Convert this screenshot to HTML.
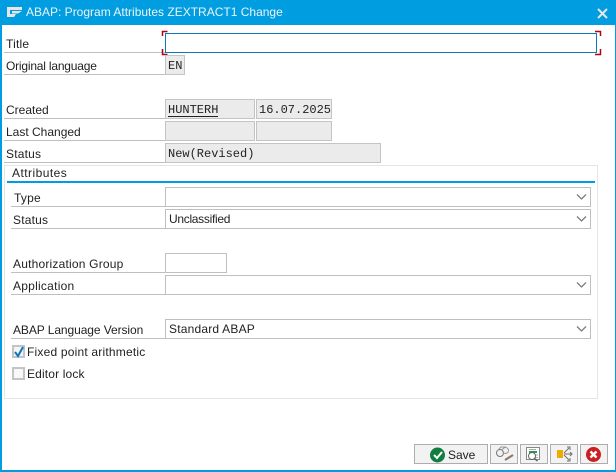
<!DOCTYPE html>
<html><head><meta charset="utf-8"><style>
html,body{margin:0;padding:0;background:#fff}
body{width:616px;height:472px;position:relative;overflow:hidden;font-family:"Liberation Sans",sans-serif;font-size:12px;color:#222}
.a{position:absolute;box-sizing:border-box}
.l{position:absolute;box-sizing:border-box;height:20px;border-bottom:1px solid #bfbfbf;line-height:23px;white-space:nowrap;letter-spacing:.2px}
.b{position:absolute;box-sizing:border-box;height:20px;border:1px solid #c4c4c4;background:#ebebeb;font:12px/21px "Liberation Mono",monospace;padding-left:2px;color:#222;white-space:nowrap}
.d{position:absolute;box-sizing:border-box;left:165px;width:426px;height:20px;border:1px solid #bfbfbf;background:#fff;line-height:18px;padding-left:3px;letter-spacing:.2px}
.d svg{position:absolute;right:3px;top:5px}
.btn{position:absolute;top:444px;height:20px;box-sizing:border-box;border:1px solid #adadad;background:#f2f2f2}
.btn svg{position:absolute;left:0;top:0}
</style></head><body>
<div class="a" style="left:0;top:0;width:616px;height:472px;border:1px solid #009de0;border-width:0 1px 2px 2px"></div>
<div class="a" style="left:0;top:0;width:616px;height:25px;background:#009de0"></div>
<svg class="a" style="left:7px;top:7px" width="16" height="11"><path d="M0 0H15V3H3V7H9L7 10H0Z" fill="#e6e6e6"/><path d="M5 4H15L11 6.500H5Z" fill="#e6e6e6"/></svg>
<div class="a" style="left:26px;top:4px;color:#e8f4fa;font-size:12px;line-height:16px;letter-spacing:0;white-space:nowrap">ABAP: Program Attributes ZEXTRACT1 Change</div>
<svg class="a" style="left:597px;top:8px" width="11" height="11"><path d="M1 1L10 10M10 1L1 10" stroke="#e6e6e6" stroke-width="2" fill="none"/></svg>

<div class="l" style="left:4px;top:33px;width:161px;padding-left:2px">Title</div>
<div class="a" style="left:165px;top:33px;width:432px;height:20px;border:1px solid #0a7cbc;background:#fff"></div>
<svg class="a" style="left:161px;top:30px" width="442" height="26" fill="none" stroke="#b5000f" stroke-width="1.500"><path d="M6.500 1.500H1.500V6M6.500 24.500H1.500V19M434 1.500H439.500V6M434 24.500H439.500V19"/></svg>

<div class="l" style="left:4px;top:55px;width:161px;padding-left:2px;letter-spacing:-.2px">Original language</div>
<div class="b" style="left:165px;top:55px;width:20px">EN</div>

<div class="l" style="left:4px;top:99px;width:161px;padding-left:2px;letter-spacing:0">Created</div>
<div class="b" style="left:165px;top:99px;width:90px">HUNTERH<span class="a" style="left:2px;top:16px;width:50px;height:1px;background:#222"></span></div>
<div class="b" style="left:256px;top:99px;width:76px">16.07.2025</div>

<div class="l" style="left:4px;top:121px;width:161px;padding-left:2px;letter-spacing:0">Last Changed</div>
<div class="b" style="left:165px;top:121px;width:90px"></div>
<div class="b" style="left:256px;top:121px;width:76px"></div>

<div class="l" style="left:4px;top:143px;width:161px;padding-left:2px">Status</div>
<div class="b" style="left:165px;top:143px;width:216px">New(Revised)</div>

<div class="a" style="left:4px;top:165px;width:594px;height:234px;border:1px solid #e5e5e5"></div>
<div class="a" style="left:12px;top:166px;line-height:15px;letter-spacing:.45px">Attributes</div>
<div class="a" style="left:7px;top:181px;width:588px;height:2px;background:#009de0"></div>

<div class="l" style="left:11px;top:187px;width:154px;padding-left:3px">Type</div>
<div class="d" style="top:187px"><svg width="11" height="8"><path d="M1 1.500L5.500 6L10 1.500" fill="none" stroke="#7d7d7d" stroke-width="1.300"/></svg></div>

<div class="l" style="left:11px;top:209px;width:154px;padding-left:2px">Status</div>
<div class="d" style="top:209px"><span style="letter-spacing:-.3px">Unclassified</span><svg width="11" height="8"><path d="M1 1.500L5.500 6L10 1.500" fill="none" stroke="#7d7d7d" stroke-width="1.300"/></svg></div>

<div class="l" style="left:11px;top:253px;width:154px;padding-left:2px">Authorization Group</div>
<div class="a" style="left:165px;top:253px;width:62px;height:20px;border:1px solid #bfbfbf;background:#fff"></div>

<div class="l" style="left:11px;top:275px;width:154px;padding-left:2px;letter-spacing:.25px">Application</div>
<div class="d" style="top:275px"><svg width="11" height="8"><path d="M1 1.500L5.500 6L10 1.500" fill="none" stroke="#7d7d7d" stroke-width="1.300"/></svg></div>

<div class="l" style="left:11px;top:319px;width:154px;padding-left:2px;letter-spacing:-.08px">ABAP Language Version</div>
<div class="d" style="top:319px">Standard ABAP<svg width="11" height="8"><path d="M1 1.500L5.500 6L10 1.500" fill="none" stroke="#7d7d7d" stroke-width="1.300"/></svg></div>

<div class="a" style="left:12px;top:345px;width:13px;height:13px;border:2px solid #c4c4c4;background:#f4f4f4"></div>
<svg class="a" style="left:12px;top:345px" width="14" height="14"><path d="M3 7L6 11L11 2" fill="none" stroke="#0a78c0" stroke-width="2"/></svg>
<div class="a" style="left:27px;top:345px;line-height:15px;letter-spacing:.2px;white-space:nowrap">Fixed point arithmetic</div>
<div class="a" style="left:12px;top:367px;width:13px;height:13px;border:2px solid #c4c4c4;background:#f8f8f8"></div>
<div class="a" style="left:27px;top:367px;line-height:15px;letter-spacing:.15px;white-space:nowrap">Editor lock</div>

<div class="btn" style="left:414px;width:74px">
<svg width="30" height="18"><circle cx="22.500" cy="10" r="7.500" fill="#107e3e"/><path d="M19 10L22 13L27 7" fill="none" stroke="#fff" stroke-width="2"/></svg>
<span class="a" style="left:33px;top:3px;line-height:15px;color:#222">Save</span></div>
<div class="btn" style="left:490px;width:28px">
<svg width="26" height="18" fill="none"><circle cx="9" cy="8" r="3.500" stroke="#777"/><circle cx="14.500" cy="5.500" r="3" stroke="#999"/><path d="M6 6L10 2H15" stroke="#999"/><path d="M14 15L22 10" stroke="#8a7a66" stroke-width="2.200"/></svg></div>
<div class="btn" style="left:520px;width:28px">
<svg width="26" height="18" fill="none"><rect x="5.500" y="2.500" width="13" height="12" fill="#fff" stroke="#888"/><path d="M8 7H16" stroke="#1f9d4a" stroke-width="2"/><path d="M8 4.500H15M14 10H17M14 12.500H17" stroke="#aaa"/><circle cx="11" cy="11" r="3.500" fill="#fff" stroke="#666"/><path d="M13.500 13.500L16.500 16" stroke="#666" stroke-width="1.500"/></svg></div>
<div class="btn" style="left:550px;width:28px">
<svg width="26" height="18" fill="none"><rect x="6" y="5" width="6" height="8" fill="#f0ab00"/><path d="M13 9H21M19 7L21 9L19 11M13 8L18 3M13 10L18 15" stroke="#6f6f6f"/><path d="M16 2H19V5M16 16H19V13" stroke="#6f6f6f"/></svg></div>
<div class="btn" style="left:580px;width:28px">
<svg width="26" height="18"><circle cx="12.500" cy="9.500" r="7.500" fill="#cc1f1f"/><path d="M9.500 6.500L15.500 12.500M15.500 6.500L9.500 12.500" stroke="#fff" stroke-width="2.400"/></svg></div>
</body></html>
